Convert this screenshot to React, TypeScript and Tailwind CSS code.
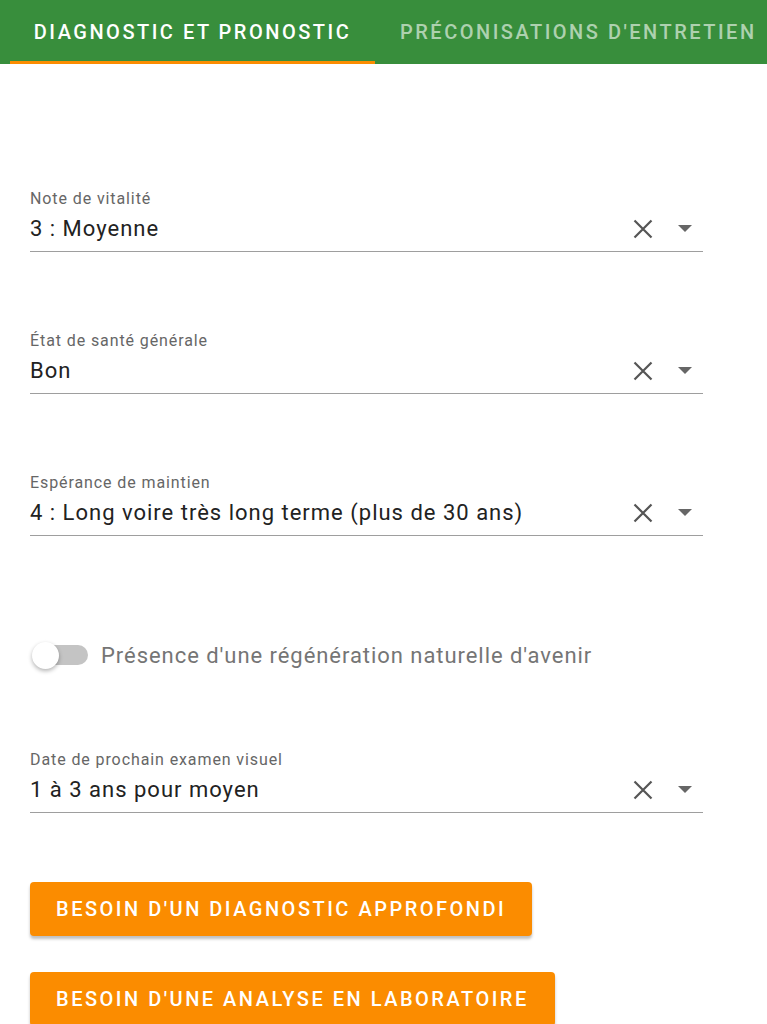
import React from 'react';

const fields = [
  { label: 'Note de vitalité', value: '3 : Moyenne' },
  { label: 'État de santé générale', value: 'Bon' },
  { label: 'Espérance de maintien', value: '4 : Long voire très long terme (plus de 30 ans)' },
];

const SelectField = ({ label, value }: { label: string; value: string }) => (
  <div className="w-[673px]">
    <div className="text-[16px] leading-[22px] tracking-[0.9px] text-[#666666]">{label}</div>
    <div className="flex items-center h-[42px] pb-[4px] border-b border-[#9e9e9e]">
      <span className="flex-1 text-[22px] tracking-[1px] text-[#222222]">{value}</span>
      <svg width="20" height="20" viewBox="0 0 20 20" className="mr-[25px]">
        <path d="M1.5 1.5 18.5 18.5M18.5 1.5 1.5 18.5" stroke="#555555" strokeWidth="2.2" />
      </svg>
      <svg width="14" height="7" viewBox="0 0 14 7" className="mr-[11px]">
        <path d="M0 0h14L7 7z" fill="#666666" />
      </svg>
    </div>
  </div>
);

export default function App() {
  return (
    <div className="min-h-screen bg-white" style={{ fontFamily: 'Roboto, "Liberation Sans", sans-serif' }}>
      <div className="flex h-[64px] bg-[#388e3c] pl-[10px]">
        <div className="relative flex items-center justify-center w-[365px] text-[20px] font-medium tracking-[2.5px] text-white whitespace-nowrap">
          DIAGNOSTIC ET PRONOSTIC
          <div className="absolute bottom-0 left-0 right-0 h-[3px] bg-[#fb8c00]" />
        </div>
        <div className="flex items-center pl-[25px] text-[20px] font-medium tracking-[2.5px] text-white/60 whitespace-nowrap">
          PRÉCONISATIONS D'ENTRETIEN
        </div>
      </div>

      <div className="pl-[30px] pt-[124px]">
        <div className="flex flex-col gap-[78px]">
          {fields.map((f) => (
            <SelectField key={f.label} label={f.label} value={f.value} />
          ))}
        </div>

        <div className="flex items-center h-[40px] mt-[99px] pl-[2px]">
          <div className="relative w-[56px] h-[20px] flex items-center">
            <div className="ml-[6px] w-[50px] h-[20px] rounded-full bg-[#c4c4c4]" />
            <div className="absolute left-[0px] w-[27px] h-[27px] rounded-full bg-white shadow-[0_2px_4px_rgba(0,0,0,0.3)]" />
          </div>
          <span className="ml-[13px] text-[22px] tracking-[0.95px] text-[#757575]">Présence d'une régénération naturelle d'avenir</span>
        </div>

        <div className="mt-[74px]">
          <SelectField label="Date de prochain examen visuel" value="1 à 3 ans pour moyen" />
        </div>

        <div className="flex flex-col items-start gap-[36px] mt-[69px]">
          <button className="h-[54px] px-[26px] rounded-[4px] bg-[#fb8c00] text-white text-[20px] font-medium tracking-[2.5px] shadow-[0_3px_3px_rgba(0,0,0,0.25)]">
            BESOIN D'UN DIAGNOSTIC APPROFONDI
          </button>
          <button className="h-[54px] px-[26px] rounded-[4px] bg-[#fb8c00] text-white text-[20px] font-medium tracking-[2.5px] shadow-[0_3px_3px_rgba(0,0,0,0.25)]">
            BESOIN D'UNE ANALYSE EN LABORATOIRE
          </button>
        </div>
      </div>
    </div>
  );
}
